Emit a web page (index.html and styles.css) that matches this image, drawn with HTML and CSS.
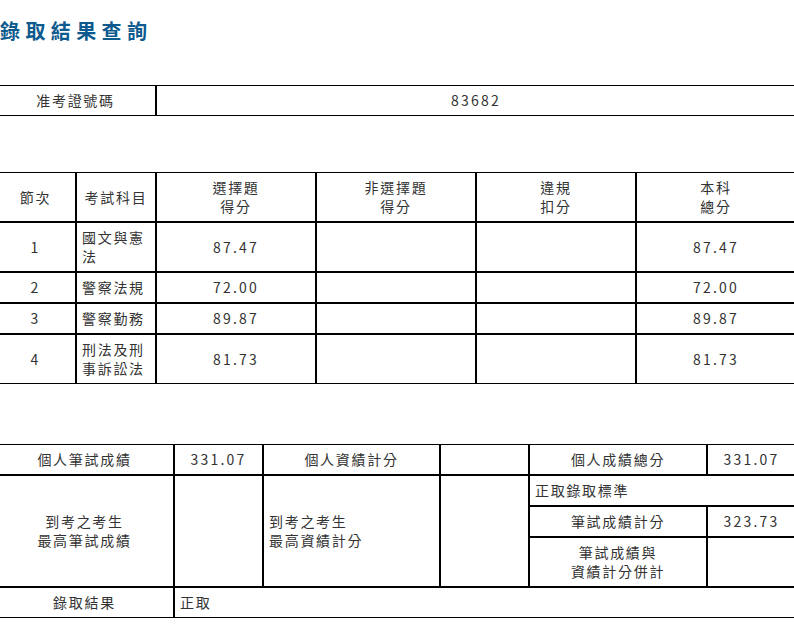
FILE: index.html
```html
<!DOCTYPE html>
<html lang="zh-Hant">
<head>
<meta charset="utf-8">
<title>錄取結果查詢</title>
<link rel="stylesheet" href="styles.css">
</head>
<body>
<h1 class="title">錄取結果查詢</h1>

<table class="grid grid-id">
  <tr>
    <td class="w-id-label">准考證號碼</td>
    <td class="w-id-value num">83682</td>
  </tr>
</table>

<table class="grid grid-scores">
  <tr>
    <td class="w-s1">節次</td>
    <td class="w-s2">考試科目</td>
    <td class="w-s3">選擇題<br>得分</td>
    <td class="w-s3">非選擇題<br>得分</td>
    <td class="w-s3">違規<br>扣分</td>
    <td class="w-s3">本科<br>總分</td>
  </tr>
  <tr class="tall">
    <td class="num">1</td>
    <td class="left">國文與憲<br>法</td>
    <td class="num">87.47</td>
    <td></td>
    <td></td>
    <td class="num">87.47</td>
  </tr>
  <tr>
    <td class="num">2</td>
    <td class="left">警察法規</td>
    <td class="num">72.00</td>
    <td></td>
    <td></td>
    <td class="num">72.00</td>
  </tr>
  <tr>
    <td class="num">3</td>
    <td class="left">警察勤務</td>
    <td class="num">89.87</td>
    <td></td>
    <td></td>
    <td class="num">89.87</td>
  </tr>
  <tr class="tall">
    <td class="num">4</td>
    <td class="left">刑法及刑<br>事訴訟法</td>
    <td class="num">81.73</td>
    <td></td>
    <td></td>
    <td class="num">81.73</td>
  </tr>
</table>

<table class="grid grid-total">
  <tr>
    <td class="w-t1">個人筆試成績</td>
    <td class="w-t2 num">331.07</td>
    <td class="w-t3">個人資績計分</td>
    <td class="w-t2"></td>
    <td class="w-t5">個人成績總分</td>
    <td class="w-t2 num">331.07</td>
  </tr>
  <tr>
    <td rowspan="3">到考之考生<br>最高筆試成績</td>
    <td rowspan="3"></td>
    <td rowspan="3" class="left">到考之考生<br>最高資績計分</td>
    <td rowspan="3"></td>
    <td colspan="2" class="left">正取錄取標準</td>
  </tr>
  <tr>
    <td>筆試成績計分</td>
    <td class="num">323.73</td>
  </tr>
  <tr class="tall">
    <td>筆試成績與<br>資績計分併計</td>
    <td></td>
  </tr>
  <tr>
    <td>錄取結果</td>
    <td colspan="5" class="left">正取</td>
  </tr>
</table>
</body>
</html>
```
FILE: styles.css
```css
html, body {
  overflow-x: hidden;
}

body {
  margin: 0;
  background: #fff;
  color: #333;
  font-family: "Noto Sans CJK TC", "Noto Sans", sans-serif;
  font-size: 14px;
}

.title {
  margin: 0;
  padding-top: 19px;
  font-size: 20px;
  line-height: 24px;
  font-weight: 700;
  letter-spacing: 5.4px;
  color: #0d5a8e;
}

.grid {
  width: 801px;
  margin-left: -5px;
  border-collapse: separate;
  border-spacing: 0;
  table-layout: fixed;
}

.grid td {
  box-sizing: border-box;
  border: 1px solid #000;
  padding: 5px 5px;
  line-height: 19px;
  height: 31px;
  text-align: center;
  vertical-align: middle;
  letter-spacing: 1.7px;
  color: #333;
}

.grid td.num {
  letter-spacing: 2.2px;
}

.grid tr.tall td {
  height: 50px;
}

.grid td.left {
  text-align: left;
}

.grid-id {
  margin-top: 42px;
}

.grid-scores {
  margin-top: 56px;
}

.grid-scores tr:first-child td {
  height: 50px;
}

.grid-total {
  margin-top: 60px;
}

.w-id-label { width: 161px; }
.w-id-value { width: 640px; }

.w-s1 { width: 81px; }
.w-s2 { width: 80px; }
.w-s3 { width: 160px; }

.w-t1 { width: 179px; }
.w-t2 { width: 89px; }
.w-t3 { width: 177px; }
.w-t5 { width: 178px; }
```
